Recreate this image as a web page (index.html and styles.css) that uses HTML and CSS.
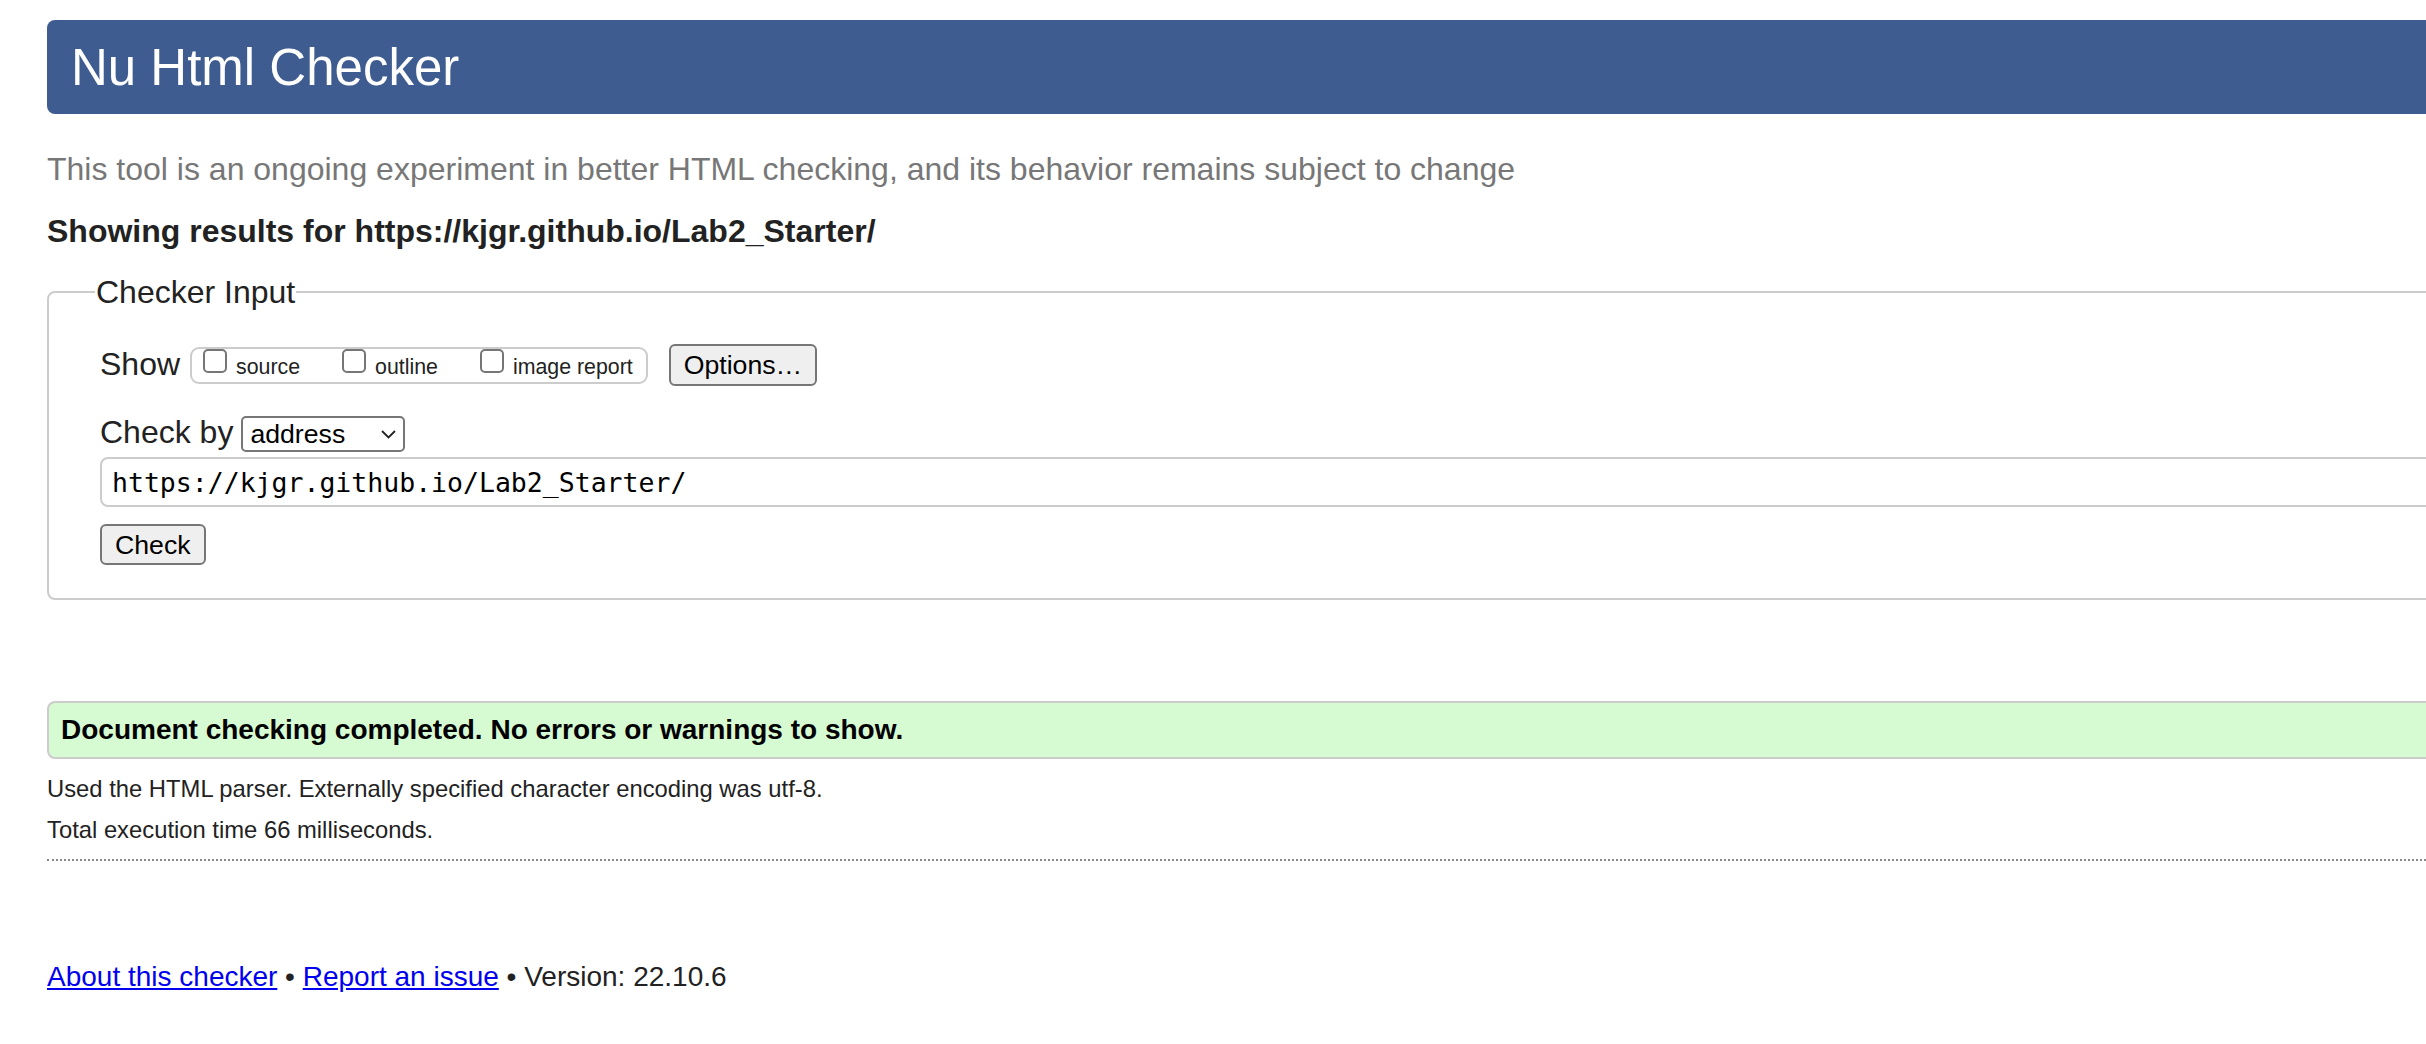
FILE: index.html
```html
<!DOCTYPE html>
<html lang="en">
<head>
<meta charset="utf-8">
<title>Showing results for https://kjgr.github.io/Lab2_Starter/ - Nu Html Checker</title>
<link rel="stylesheet" href="styles.css">
</head>
<body>
<div class="page">
  <h1 class="masthead">Nu Html Checker</h1>
  <p class="tagline">This tool is an ongoing experiment in better HTML checking, and its behavior remains subject to change</p>
  <p class="results-for">Showing results for https://kjgr.github.io/Lab2_Starter/</p>
  <form class="checker-form">
    <fieldset class="checker-input">
      <legend class="checker-legend">Checker Input</legend>
      <div class="row show-row">
        <span class="row-label show-label">Show</span>
        <span class="show-options">
          <label class="opt"><input type="checkbox" class="cb"><span class="opt-text">source</span></label>
          <label class="opt"><input type="checkbox" class="cb"><span class="opt-text">outline</span></label>
          <label class="opt"><input type="checkbox" class="cb"><span class="opt-text">image report</span></label>
        </span>
        <button type="button" class="btn btn-options">Options…</button>
      </div>
      <div class="row checkby-row">
        <label class="row-label checkby-label" for="docselect">Check by</label>
        <span class="select-wrap">
          <select id="docselect" class="select"><option>address</option></select>
          <svg class="chev" width="15" height="9" viewBox="0 0 15 9" aria-hidden="true"><polyline points="1,1 7.5,7.5 14,1" fill="none" stroke="#222" stroke-width="1.8"/></svg>
        </span>
      </div>
      <input class="url" type="url" value="https://kjgr.github.io/Lab2_Starter/">
      <div class="submit-row"><button type="button" class="btn btn-check">Check</button></div>
    </fieldset>
  </form>
  <p class="success">Document checking completed. No errors or warnings to show.</p>
  <p class="details first">Used the HTML parser. Externally specified character encoding was utf-8.</p>
  <p class="details second">Total execution time 66 milliseconds.</p>
  <hr class="sep">
  <p class="footer"><a href="#about" class="flink">About this checker</a> • <a href="#issue" class="flink">Report an issue</a> • Version: 22.10.6</p>
</div>
</body>
</html>
```
FILE: styles.css
```css
html, body {
  margin: 0;
  padding: 0;
  background: #fff;
  overflow: hidden;
}
body {
  font-family: "Liberation Sans", Arial, Helvetica, sans-serif;
  color: #222;
}
.page {
  padding-left: 47px;
  margin-right: -300px;
}
.masthead {
  margin: 20px 0 0;
  height: 94px;
  box-sizing: border-box;
  padding: 19px 25px 0 24px;
  font-size: 51px;
  font-weight: normal;
  line-height: 57px;
  background: #3e5c8f;
  color: #fff;
  border-radius: 8px;
}
.tagline {
  margin: 37px 0 0;
  font-size: 32px;
  line-height: 36px;
  color: #777;
}
.results-for {
  margin: 26px 0 0;
  font-size: 32px;
  line-height: 36px;
  font-weight: bold;
}
.checker-form {
  margin: 25px 0 0;
}
.checker-input {
  margin: 0;
  min-width: 0;
  border: 2px solid #ccc;
  border-radius: 8px;
  padding: 32px 0 33px 51px;
}
.checker-legend {
  font-size: 32px;
  line-height: 36px;
  padding: 0 1px;
  margin-left: -5px;
}
.row {
  display: flex;
  align-items: flex-start;
}
.row-label {
  font-size: 32px;
  line-height: 36px;
}
.show-label {
  margin-right: 10px;
  margin-top: 4px;
}
.show-options {
  display: flex;
  align-items: flex-start;
  box-sizing: border-box;
  height: 37px;
  margin-top: 5px;
  padding: 0 13px 0 11px;
  border: 2px solid #ccc;
  border-radius: 9px;
}
.opt {
  display: flex;
  align-items: flex-start;
}
.opt + .opt {
  margin-left: 42px;
}
.cb {
  appearance: none;
  -webkit-appearance: none;
  box-sizing: border-box;
  width: 24px;
  height: 24px;
  margin: 0;
  border: 2px solid #767676;
  border-radius: 5px;
  background: #fff;
}
.opt-text {
  margin-left: 9px;
  margin-top: 6px;
  font-size: 21.33px;
  line-height: 24px;
}
.btn {
  box-sizing: border-box;
  background: #efefef;
  border: 2px solid #767676;
  border-radius: 6px;
  color: #000;
  font-family: "Liberation Sans", Arial, Helvetica, sans-serif;
  font-size: 26.67px;
  line-height: 30px;
  padding: 0 13px;
}
.btn-options {
  margin-left: 21px;
  margin-top: 2px;
  height: 42px;
}
.checkby-row {
  margin-top: 28px;
}
.checkby-label {
  margin-right: 8px;
}
.select-wrap {
  position: relative;
  margin-top: 2px;
}
.select {
  appearance: none;
  -webkit-appearance: none;
  box-sizing: border-box;
  width: 164px;
  height: 36px;
  margin: 0;
  padding: 0 0 0 7px;
  border: 2px solid #767676;
  border-radius: 5px;
  background: #fff;
  color: #000;
  font-family: "Liberation Sans", Arial, Helvetica, sans-serif;
  font-size: 26.67px;
}
.chev {
  position: absolute;
  right: 9px;
  top: 14px;
  pointer-events: none;
}
.url {
  display: block;
  box-sizing: border-box;
  width: 100%;
  height: 50px;
  margin: 5px 0 0;
  padding: 0 10px;
  border: 2px solid #ccc;
  border-radius: 8px;
  font-family: "DejaVu Sans Mono", "Liberation Mono", monospace;
  font-size: 26.5px;
  color: #000;
  background: #fff;
}
.submit-row {
  margin-top: 17px;
}
.btn-check {
  height: 41px;
}
.success {
  margin: 101px 0 0;
  height: 58px;
  box-sizing: border-box;
  padding: 11px 12px 0;
  border: 2px solid #ccc;
  border-radius: 8px;
  background: #d6fbd2;
  color: #000;
  font-size: 28px;
  line-height: 32px;
  font-weight: bold;
}
.details {
  font-size: 23.8px;
  line-height: 28px;
  color: #222;
}
.details.first {
  margin: 16px 0 0;
}
.details.second {
  margin: 13px 0 0;
}
.sep {
  margin: 15px 0 0;
  height: 0;
  border: 0;
  border-top: 2px dotted #888;
}
.footer {
  margin: 100px 0 0;
  font-size: 28px;
  line-height: 32px;
  color: #222;
}
.flink {
  color: #00e;
  text-decoration: underline;
}
```
